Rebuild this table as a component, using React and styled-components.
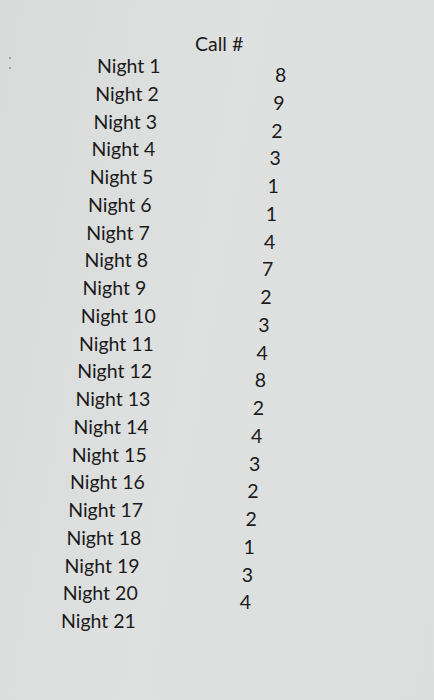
import React from 'react'
import styled, { createGlobalStyle } from 'styled-components'

const GlobalStyle = createGlobalStyle`
  html, body { margin: 0; padding: 0; }
  body { background: #dcdedd; }
`;

// the sheet is photographed a bit skewed, so each row drifts left
const SKEW = 1.8;
const ROW = 27.75;

const Sheet = styled.div`
  width: 434px;
  height: 700px;
  box-sizing: border-box;
  overflow: hidden;
  background: linear-gradient(100deg, #d9dbdb 0%, #dfe1e0 45%, #dcdedd 100%);
  color: #1a1a1a;
  font-family: Lato, "Open Sans", sans-serif;
  font-size: 19.5px;
  padding-top: 30px;
  position: relative;
`;

const Specks = styled.div`
  position: absolute;
  left: 9px;
  top: 57px;
  width: 3px;
  height: 12px;
  display: flex;
  flex-direction: column;
  justify-content: space-between;
  span {
    width: 2px;
    height: 2px;
    border-radius: 50%;
    background: #8a8c8c;
  }
`;

const Header = styled.div`
  padding-left: 195px;
  line-height: 28px;
  height: 22px;
`;

const Table = styled.div`
  display: flex;
`;

const Labels = styled.div`
  width: 275px;
  padding-left: 97px;
  box-sizing: border-box;
  display: flex;
  flex-direction: column;
`;

const Label = styled.div`
  line-height: ${ROW}px;
  height: ${ROW}px;
  margin-left: ${p => -p.$i * SKEW}px;
  white-space: nowrap;
`;

const Counts = styled.div`
  display: flex;
  flex-direction: column;
  padding-top: 9px;
`;

const Count = styled.div`
  line-height: ${ROW}px;
  height: ${ROW}px;
  margin-left: ${p => -p.$i * 1.85}px;
`;

const calls = [8, 9, 2, 3, 1, 1, 4, 7, 2, 3, 4, 8, 2, 4, 3, 2, 2, 1, 3, 4];

const App = () => {
  const nights = Array.from({ length: 21 }, (_, i) => `Night ${i + 1}`);
  return (
    <>
      <GlobalStyle />
      <Sheet>
        <Specks><span /><span /></Specks>
        <Header>Call #</Header>
        <Table>
          <Labels>
            {nights.map((n, i) => <Label key={n} $i={i}>{n}</Label>)}
          </Labels>
          <Counts>
            {calls.map((c, i) => <Count key={i} $i={i}>{c}</Count>)}
          </Counts>
        </Table>
      </Sheet>
    </>
  )
}

export default App
